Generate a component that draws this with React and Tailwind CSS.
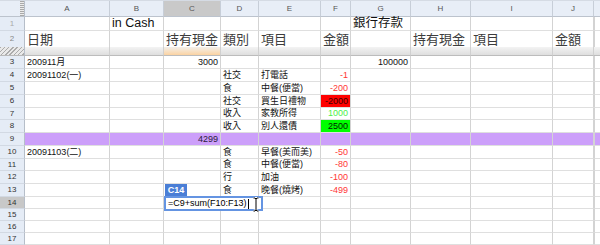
import React from "react";

const W = ["w-[85px]", "w-[54px]", "w-[57px]", "w-[38px]", "w-[62px]", "w-[30px]", "w-[60px]", "w-[60px]", "w-[82px]", "w-[41px]"];
const LETTERS = ["A", "B", "C", "D", "E", "F", "G", "H", "I", "J"];

const RED = "text-[#ff3636]";
const GREEN = "text-[#4cef4c]";

const rows = [
  { n: 3, h: "h-[13px]", c: { 0: { t: "200911月" }, 2: { t: "3000", r: true }, 6: { t: "100000", r: true } } },
  { n: 4, h: "h-[13px]", c: { 0: { t: "20091102(一)" }, 3: { t: "社交" }, 4: { t: "打電話" }, 5: { t: "-1", r: true, cl: RED } } },
  { n: 5, h: "h-[13px]", c: { 3: { t: "食" }, 4: { t: "中餐(便當)" }, 5: { t: "-200", r: true, cl: RED } } },
  { n: 6, h: "h-[13px]", c: { 3: { t: "社交" }, 4: { t: "買生日禮物" }, 5: { t: "-2000", r: true, cl: "text-[#3a0000]", bg: "bg-[#ff0000]" } } },
  { n: 7, h: "h-[12px]", c: { 3: { t: "收入" }, 4: { t: "家教所得" }, 5: { t: "1000", r: true, cl: GREEN } } },
  { n: 8, h: "h-[13px]", c: { 3: { t: "收入" }, 4: { t: "別人還債" }, 5: { t: "2500", r: true, cl: "text-[#002200]", bg: "bg-[#00ff00]" } } },
  { n: 9, h: "h-[13px]", purple: true, c: { 2: { t: "4299", r: true, cl: "text-[#2a1a3a]" } } },
  { n: 10, h: "h-[13px]", c: { 0: { t: "20091103(二)" }, 3: { t: "食" }, 4: { t: "早餐(美而美)" }, 5: { t: "-50", r: true, cl: RED } } },
  { n: 11, h: "h-[12px]", c: { 3: { t: "食" }, 4: { t: "中餐(便當)" }, 5: { t: "-80", r: true, cl: RED } } },
  { n: 12, h: "h-[13px]", c: { 3: { t: "行" }, 4: { t: "加油" }, 5: { t: "-100", r: true, cl: RED } } },
  { n: 13, h: "h-[13px]", c: { 3: { t: "食" }, 4: { t: "晚餐(燒烤)" }, 5: { t: "-499", r: true, cl: RED } } },
  { n: 14, h: "h-[12px]", sel: true, c: {} },
  { n: 15, h: "h-[12px]", c: {} },
  { n: 16, h: "h-[12px]", c: {} },
  { n: 17, h: "h-[12px]", c: {} },
];

const base =
  "shrink-0 flex items-center whitespace-nowrap border-r border-r-[#d3d3d3] border-b border-b-[#dfdfdf] leading-none";

function DataRow({ row }) {
  return (
    <div className={"flex " + row.h}>
      <div
        className={
          "w-[25px] shrink-0 flex items-center justify-center text-[8px] leading-none text-[#333] border-r border-r-[#b6bec9] border-b border-b-[#d2d9e3] " +
          (row.sel ? "bg-[#c8c8c8]" : "bg-[#e5ecf6]")
        }
      >
        {row.n}
      </div>
      {W.map((w, i) => {
        const c = row.c[i];
        const bg = c && c.bg ? c.bg : row.purple ? "bg-[#cc9ffa]" : "bg-white";
        return (
          <div
            key={i}
            className={
              base +
              " " +
              w +
              " " +
              bg +
              " text-[9px] " +
              (c && c.r ? "justify-end pr-[2px]" : "pl-[2px]") +
              " " +
              (c && c.cl ? c.cl : "text-[#111]")
            }
          >
            {c ? c.t : null}
          </div>
        );
      })}
      <div className={"flex-1 border-l border-l-[#d3d3d3] border-b border-b-[#dfdfdf] " + (row.purple ? "bg-[#cc9ffa]" : "bg-white")} />
    </div>
  );
}

export default function App() {
  return (
    <div className="relative w-[600px] h-[245px] overflow-hidden bg-white font-['Liberation_Sans','Noto_Sans_CJK_TC',sans-serif]">
      {/* column headers */}
      <div className="flex h-[17px] bg-[#e8eef7] border-t border-t-[#d5dbe4]">
        <div className="w-[25px] shrink-0 flex justify-end border-r border-r-[#b6bec9] border-b border-b-[#bcc3cd]">
          <div className="w-[4px] h-full bg-[repeating-linear-gradient(0deg,#a9a9a9_0px,#a9a9a9_1px,#ececec_1px,#ececec_2px)]" />
        </div>
        {W.map((w, i) => (
          <div
            key={i}
            className={
              "shrink-0 flex items-center justify-center text-[8px] leading-none text-[#555] border-r border-r-[#c7ced8] border-b border-b-[#bcc3cd] " +
              w +
              (i === 2 ? " bg-[#c9c9c9] text-[#333]" : "")
            }
          >
            {LETTERS[i]}
          </div>
        ))}
        <div className="flex-1 border-b border-b-[#bcc3cd]" />
      </div>

      {/* row 1 */}
      <div className="flex h-[14px]">
        <div className="w-[25px] shrink-0 flex items-center justify-center text-[8px] leading-none text-[#aaa] bg-[#e5ecf6] border-r border-r-[#b6bec9] border-b border-b-[#d2d9e3]">
          1
        </div>
        {W.map((w, i) => (
          <div key={i} className={base + " " + w + " bg-white text-[12.5px] text-[#111] pl-[2px]"}>
            {i === 1 ? "in Cash" : i === 6 ? "銀行存款" : null}
          </div>
        ))}
        <div className="flex-1 border-l border-l-[#d3d3d3] border-b border-b-[#dfdfdf]" />
      </div>

      {/* row 2 */}
      <div className="flex h-[16px]">
        <div className="w-[25px] shrink-0 flex items-center justify-center text-[8px] leading-none text-[#888] bg-[#e5ecf6] border-r border-r-[#b6bec9]">
          2
        </div>
        {W.map((w, i) => {
          const t = { 0: "日期", 2: "持有現金", 3: "類別", 4: "項目", 5: "金額", 7: "持有現金", 8: "項目", 9: "金額" }[i];
          return (
            <div key={i} className={"shrink-0 flex items-center whitespace-nowrap leading-none border-r border-r-[#d3d3d3] bg-white text-[13px] text-[#3c3c3c] pl-[2px] " + w}>
              {t || null}
            </div>
          );
        })}
        <div className="flex-1 border-l border-l-[#d3d3d3]" />
      </div>

      {/* freeze bar */}
      <div className="flex h-[9px]">
        <div className="w-[25px] shrink-0 border-r border-r-[#b6bec9] border-b border-b-[#b9b9b9] bg-[repeating-linear-gradient(135deg,#ababab_0px,#ababab_1px,#e9e9e9_1px,#e9e9e9_3px)]" />
        {W.map((w, i) => (
          <div
            key={i}
            className={
              "shrink-0 border-r border-r-[#d0d0d0] border-b border-b-[#bcbcbc] bg-linear-to-b " +
              w +
              (i === 2 ? " from-[#f2efea] to-[#fbd3a2]" : " from-[#f3f3f3] to-[#dedede]")
            }
          />
        ))}
        <div className="flex-1 border-b border-b-[#bcbcbc] bg-linear-to-b from-[#f3f3f3] to-[#dedede]" />
      </div>

      {rows.map((r) => (
        <DataRow key={r.n} row={r} />
      ))}

      {/* cell name tooltip */}
      <div className="absolute left-[165px] top-[184px] w-[22px] h-[13px] bg-[#4a7ed6] flex items-center justify-center text-[9px] font-bold leading-none text-white">
        C14
      </div>

      {/* editor box */}
      <div className="absolute left-[164px] top-[196px] w-[99px] h-[15px] border-2 border-[#6494e2] bg-white flex items-center pl-[2px] text-[9px] leading-none text-black whitespace-nowrap">
        <span>=C9+sum(F10:F13)</span>
        <span className="ml-[1px] w-px h-[10px] bg-black" />
      </div>

      {/* I-beam mouse cursor */}
      <svg className="absolute left-[252px] top-[197px]" width="8" height="15" viewBox="0 0 8 15">
        <path
          d="M1.5 1 H3 L4 2 L5 1 H6.5 M4 2 V13 M1.5 14 H3 L4 13 L5 14 H6.5"
          fill="none"
          stroke="#fff"
          strokeWidth="2.6"
          strokeLinejoin="round"
        />
        <path
          d="M1.5 1 H3 L4 2 L5 1 H6.5 M4 2 V13 M1.5 14 H3 L4 13 L5 14 H6.5"
          fill="none"
          stroke="#000"
          strokeWidth="1"
        />
      </svg>
    </div>
  );
}
